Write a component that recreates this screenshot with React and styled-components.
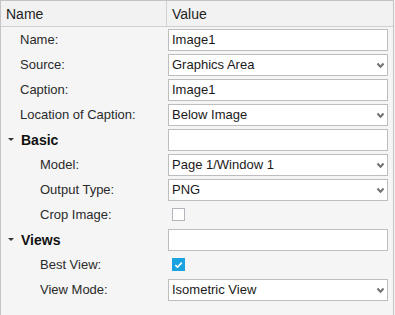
import React from "react";
import styled, { createGlobalStyle } from "styled-components";

const GlobalStyle = createGlobalStyle`
  html, body {
    margin: 0;
    padding: 0;
    background: #f5f5f5;
  }
  body {
    font-family: "Liberation Sans", Arial, sans-serif;
    font-size: 13px;
    color: #222;
  }
`;

const Panel = styled.div`
  width: 394px;
  height: 315px;
  box-sizing: border-box;
  border-left: 1px solid #c4c4c4;
  border-right: 1px solid #c4c4c4;
  border-top: 1px solid #c4c4c4;
  background: #f5f5f5;
`;

const Header = styled.div`
  display: grid;
  grid-template-columns: 166px 1fr;
  height: 25px;
  background: #f2f2f2;
  border-bottom: 1px solid #cfcfcf;
`;

const HeaderCell = styled.div`
  display: flex;
  align-items: center;
  padding-left: 5px;
  font-size: 14px;
  color: #222;
  border-right: ${(p) => (p.$sep ? "1px solid #d2d2d2" : "none")};
`;

const Body = styled.div`
  display: flex;
  flex-direction: column;
`;

const Row = styled.div`
  display: grid;
  grid-template-columns: 167px 220px;
  height: 25px;
  align-items: center;
`;

const Label = styled.div`
  display: flex;
  align-items: center;
  gap: 7px;
  padding-left: ${(p) => p.$indent}px;
  font-weight: ${(p) => (p.$bold ? "bold" : "normal")};
  font-size: ${(p) => (p.$bold ? "14px" : "13px")};
  color: ${(p) => (p.$bold ? "#111" : "#2a2a2a")};
`;

const Caret = styled.span`
  width: 0;
  height: 0;
  border-left: 3px solid transparent;
  border-right: 3px solid transparent;
  border-top: 3px solid #333;
`;

const Field = styled.div`
  position: relative;
  height: 22px;
  box-sizing: border-box;
  border: 1px solid #bdbdbd;
  background: #fff;
  display: flex;
  align-items: center;
  padding-left: 3px;
  font-size: 13px;
  color: #1a1a1a;
`;

const Arrow = styled.svg`
  position: absolute;
  right: 2px;
  top: 7px;
`;

const Box = styled.div`
  width: 13px;
  height: 13px;
  box-sizing: border-box;
  margin-left: 4px;
  border: 1px solid ${(p) => (p.$checked ? "#1aa3e0" : "#b4b4bd")};
  background: ${(p) => (p.$checked ? "#1aa3e0" : "#fff")};
  display: flex;
  align-items: center;
  justify-content: center;
`;

const Chevron = () => (
  <Arrow width="9" height="7" viewBox="0 0 9 7">
    <path d="M1.5 1.5 L4.5 4.8 L7.5 1.5" fill="none" stroke="#6e6e6e" strokeWidth="2" />
  </Arrow>
);

const Input = ({ value, select }) => (
  <Field>
    {value}
    {select && <Chevron />}
  </Field>
);

const Check = ({ checked }) => (
  <Box $checked={checked}>
    {checked && (
      <svg width="9" height="8" viewBox="0 0 9 8">
        <path d="M1.3 4.2 L3.5 6.2 L7.8 1.6" fill="none" stroke="#fff" strokeWidth="1.6" />
      </svg>
    )}
  </Box>
);

const rows = [
  { label: "Name:", indent: 19, value: "Image1" },
  { label: "Source:", indent: 19, value: "Graphics Area", select: true },
  { label: "Caption:", indent: 19, value: "Image1" },
  { label: "Location of Caption:", indent: 19, value: "Below Image", select: true },
  { label: "Basic", group: true, value: "" },
  { label: "Model:", indent: 39, value: "Page 1/Window 1", select: true },
  { label: "Output Type:", indent: 39, value: "PNG", select: true },
  { label: "Crop Image:", indent: 39, check: false },
  { label: "Views", group: true, value: "" },
  { label: "Best View:", indent: 39, check: true },
  { label: "View Mode:", indent: 39, value: "Isometric View", select: true },
];

export default function App() {
  return (
    <>
      <GlobalStyle />
      <Panel>
        <Header>
          <HeaderCell $sep>Name</HeaderCell>
          <HeaderCell>Value</HeaderCell>
        </Header>
        <Body>
          {rows.map((r) => (
            <Row key={r.label}>
              {r.group ? (
                <Label $indent={7} $bold>
                  <Caret />
                  {r.label}
                </Label>
              ) : (
                <Label $indent={r.indent}>{r.label}</Label>
              )}
              {r.check !== undefined ? (
                <Check checked={r.check} />
              ) : (
                <Input value={r.value} select={r.select} />
              )}
            </Row>
          ))}
        </Body>
      </Panel>
    </>
  );
}
